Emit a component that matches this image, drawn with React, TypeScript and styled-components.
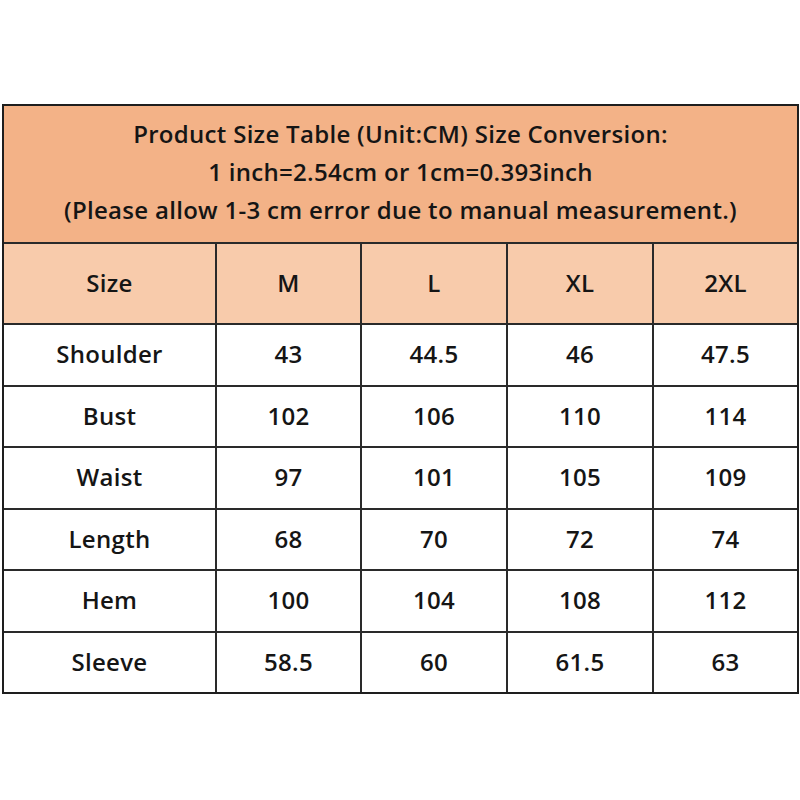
import React from "react";
import styled, { createGlobalStyle } from "styled-components";

const Global = createGlobalStyle`
  html, body { margin: 0; padding: 0; background: #ffffff; }
  body { font-family: "Open Sans", "Noto Sans", sans-serif; }
`;

const Page = styled.div`
  width: 800px;
  height: 800px;
  padding-top: 104px;
  padding-left: 2px;
  box-sizing: border-box;
`;

const Table = styled.div`
  width: 797px;
  box-sizing: border-box;
  border: 2px solid #1e1e1e;
  background: #2a2a2a;
  display: grid;
  grid-template-columns: 211px 143px 144px 144px 143px;
  grid-template-rows: 136px 79px repeat(6, 59.5px);
  gap: 2px;
`;

const Title = styled.div`
  grid-column: 1 / -1;
  background: #f3b287;
  display: flex;
  flex-direction: column;
  align-items: center;
  justify-content: center;
  font-weight: 600;
  font-size: 24px;
  letter-spacing: 0.3px;
  line-height: 38px;
  color: #151515;
  padding-bottom: 4px;
  box-sizing: border-box;
`;

const Cell = styled.div<{ $head?: boolean }>`
  background: ${(p) => (p.$head ? "#f8cbab" : "#ffffff")};
  display: flex;
  align-items: center;
  justify-content: center;
  font-weight: 600;
  font-size: 24px;
  letter-spacing: 0.3px;
  color: #151515;
  padding-bottom: 2px;
  box-sizing: border-box;
`;

const headers = ["Size", "M", "L", "XL", "2XL"];
const rows: string[][] = [
  ["Shoulder", "43", "44.5", "46", "47.5"],
  ["Bust", "102", "106", "110", "114"],
  ["Waist", "97", "101", "105", "109"],
  ["Length", "68", "70", "72", "74"],
  ["Hem", "100", "104", "108", "112"],
  ["Sleeve", "58.5", "60", "61.5", "63"],
];

export default function App() {
  return (
    <Page>
      <Global />
      <Table>
        <Title>
          <span>Product Size Table (Unit:CM) Size Conversion:</span>
          <span>1 inch=2.54cm or 1cm=0.393inch</span>
          <span>(Please allow 1-3 cm error due to manual measurement.)</span>
        </Title>
        {headers.map((h) => (
          <Cell key={h} $head>
            {h}
          </Cell>
        ))}
        {rows.map((r) =>
          r.map((v, i) => <Cell key={r[0] + i}>{v}</Cell>)
        )}
      </Table>
    </Page>
  );
}
